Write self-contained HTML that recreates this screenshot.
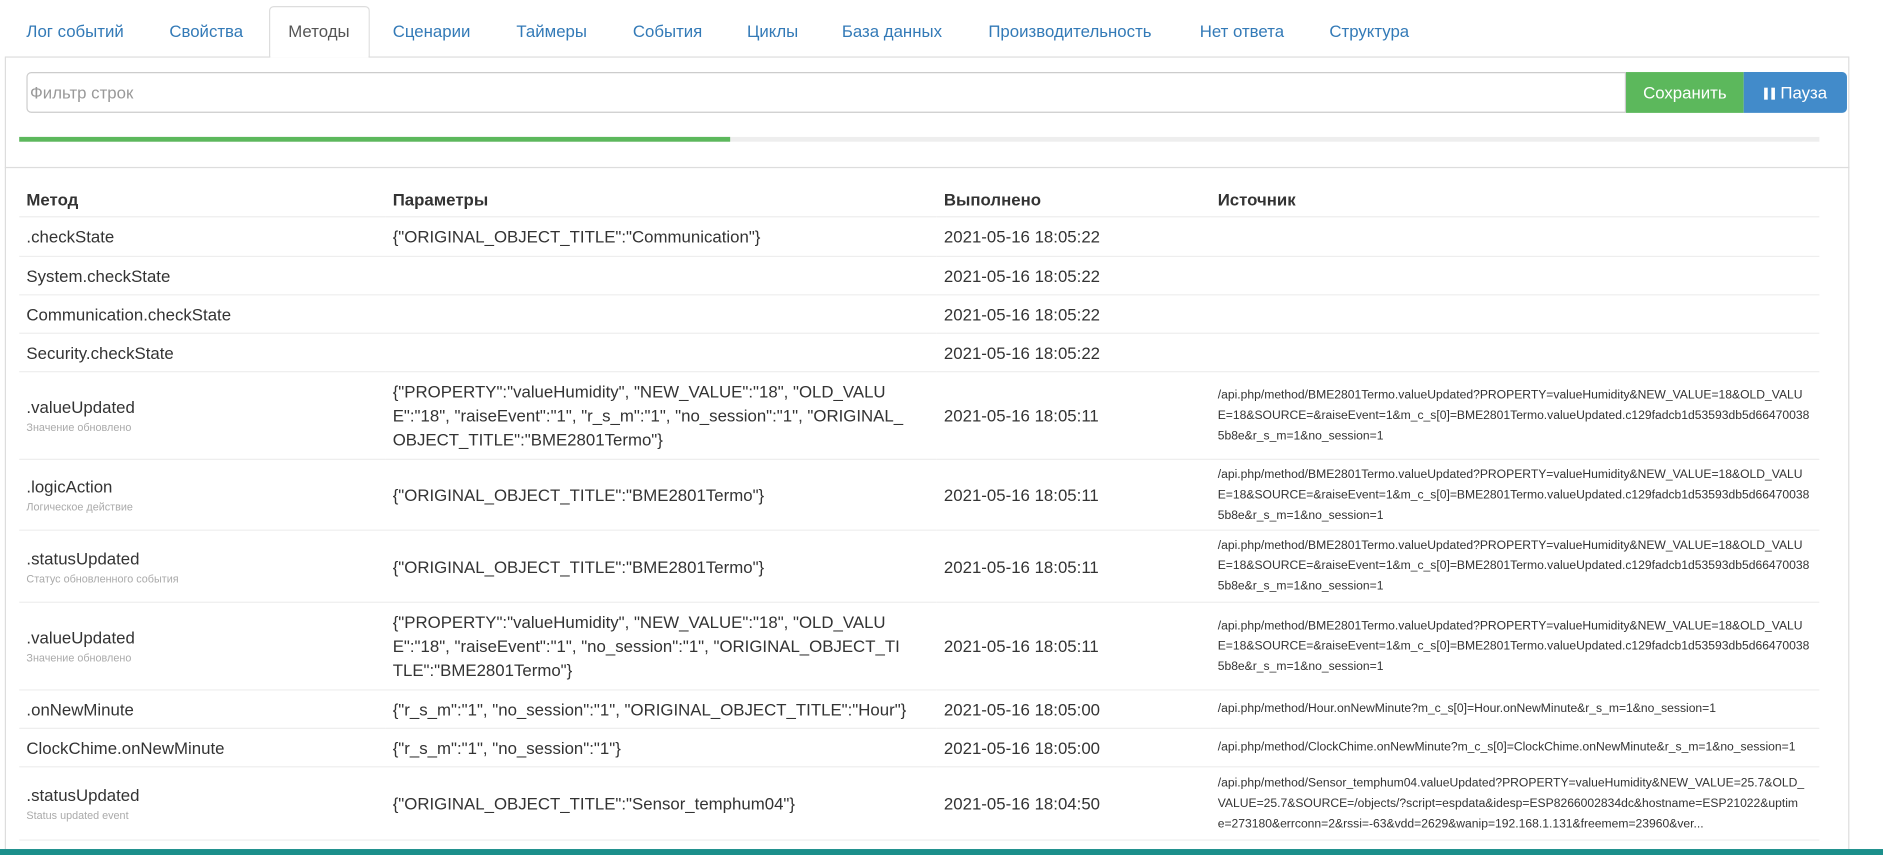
<!DOCTYPE html>
<html><head><meta charset="utf-8">
<style>
html,body{margin:0;padding:0;width:1883px;height:855px;overflow:hidden;background:#fff}
#w{position:absolute;left:0;top:0;width:1568px;height:712px;transform:scale(1.2009);transform-origin:0 0;font-family:"Liberation Sans",Arial,sans-serif;color:#333;font-size:14px;overflow:hidden}
.tabs{position:absolute;left:0;top:0;width:1568px;height:47px}
.tab{position:absolute;top:18px;color:#337ab7;font-size:14px}
.act{position:absolute;left:224px;top:5px;width:84px;height:43px;background:#fff;border:1px solid #ddd;border-bottom:none;border-radius:4px 4px 0 0;box-sizing:border-box}
.panel{position:absolute;left:4px;top:47px;width:1536px;height:670px;border:1px solid #ddd;box-sizing:border-box}
.inp{position:absolute;left:22px;top:60px;width:1332px;height:34px;border:1px solid #ccc;border-radius:4px 0 0 4px;box-sizing:border-box;color:#999;font-size:14px;padding:8px 0 0 2px}
.btn{position:absolute;top:60px;height:34px;color:#fff;font-size:14px;box-sizing:border-box;padding-top:9px;text-align:center}
.prog{position:absolute;left:16px;top:114px;width:1499px;height:4px;background:#eee}
.prog div{width:592px;height:4px;background:#5cb85c}
.sep{position:absolute;left:4px;top:139px;width:1536px;height:1px;background:#ddd}
table{position:absolute;left:16px;top:143px;width:1499px;border-collapse:collapse;table-layout:fixed}
td,th{padding:0 0 0 6px;text-align:left;vertical-align:middle;border-top:1px solid #eee;white-space:nowrap}
th{border-top:none;font-weight:bold;height:31px;vertical-align:bottom;padding-bottom:6px}
td{font-size:14px;line-height:20px}
td.s{font-size:10.1px;line-height:17px}
small{display:block;font-size:9px;color:#aaa;line-height:14px}
.bot{position:absolute;left:0;top:707px;width:1568px;height:5px;background:#1b8f8b}
</style></head><body><div id="w">
<div class="tabs">
<div class="act"></div>
<span class="tab" style="left:22px">Лог событий</span>
<span class="tab" style="left:141px">Свойства</span>
<span class="tab" style="left:240px;color:#555">Методы</span>
<span class="tab" style="left:327px">Сценарии</span>
<span class="tab" style="left:430px">Таймеры</span>
<span class="tab" style="left:527px">События</span>
<span class="tab" style="left:622px">Циклы</span>
<span class="tab" style="left:701px">База данных</span>
<span class="tab" style="left:823px">Производительность</span>
<span class="tab" style="left:999px">Нет ответа</span>
<span class="tab" style="left:1107px">Структура</span>
</div>
<div class="panel"></div>
<div class="act" style="height:2px;top:46px;border:none;left:225px;width:82px"></div>
<div class="inp">Фильтр строк</div>
<div class="btn" style="left:1354px;width:98px;background:#5cb85c">Сохранить</div>
<div class="btn" style="left:1452px;width:86px;background:#428bca;border-radius:0 4px 4px 0"><span style="display:inline-block;width:3px;height:10px;border-left:3px solid #fff;border-right:3px solid #fff;margin-right:5px;vertical-align:-1px"></span>Пауза</div>
<div class="prog"><div></div></div>
<div class="sep"></div>
<table>
<colgroup><col style="width:305px"><col style="width:459px"><col style="width:228px"><col style="width:507px"></colgroup>
<tr><th>Метод</th><th>Параметры</th><th>Выполнено</th><th>Источник</th></tr>
<tr style="height:33px"><td>.checkState</td><td>{"ORIGINAL_OBJECT_TITLE":"Communication"}</td><td>2021-05-16 18:05:22</td><td class="s"></td></tr>
<tr style="height:32px"><td>System.checkState</td><td></td><td>2021-05-16 18:05:22</td><td></td></tr>
<tr style="height:32px"><td>Communication.checkState</td><td></td><td>2021-05-16 18:05:22</td><td></td></tr>
<tr style="height:32px"><td>Security.checkState</td><td></td><td>2021-05-16 18:05:22</td><td></td></tr>
<tr style="height:73px"><td>.valueUpdated<small>Значение обновлено</small></td><td>{"PROPERTY":"valueHumidity", "NEW_VALUE":"18", "OLD_VALU<br>E":"18", "raiseEvent":"1", "r_s_m":"1", "no_session":"1", "ORIGINAL_<br>OBJECT_TITLE":"BME2801Termo"}</td><td>2021-05-16 18:05:11</td><td class="s">/api.php/method/BME2801Termo.valueUpdated?PROPERTY=valueHumidity&amp;NEW_VALUE=18&amp;OLD_VALU<br>E=18&amp;SOURCE=&amp;raiseEvent=1&amp;m_c_s[0]=BME2801Termo.valueUpdated.c129fadcb1d53593db5d66470038<br>5b8e&amp;r_s_m=1&amp;no_session=1</td></tr>
<tr style="height:59px"><td>.logicAction<small>Логическое действие</small></td><td>{"ORIGINAL_OBJECT_TITLE":"BME2801Termo"}</td><td>2021-05-16 18:05:11</td><td class="s">/api.php/method/BME2801Termo.valueUpdated?PROPERTY=valueHumidity&amp;NEW_VALUE=18&amp;OLD_VALU<br>E=18&amp;SOURCE=&amp;raiseEvent=1&amp;m_c_s[0]=BME2801Termo.valueUpdated.c129fadcb1d53593db5d66470038<br>5b8e&amp;r_s_m=1&amp;no_session=1</td></tr>
<tr style="height:60px"><td>.statusUpdated<small>Статус обновленного события</small></td><td>{"ORIGINAL_OBJECT_TITLE":"BME2801Termo"}</td><td>2021-05-16 18:05:11</td><td class="s">/api.php/method/BME2801Termo.valueUpdated?PROPERTY=valueHumidity&amp;NEW_VALUE=18&amp;OLD_VALU<br>E=18&amp;SOURCE=&amp;raiseEvent=1&amp;m_c_s[0]=BME2801Termo.valueUpdated.c129fadcb1d53593db5d66470038<br>5b8e&amp;r_s_m=1&amp;no_session=1</td></tr>
<tr style="height:73px"><td>.valueUpdated<small>Значение обновлено</small></td><td>{"PROPERTY":"valueHumidity", "NEW_VALUE":"18", "OLD_VALU<br>E":"18", "raiseEvent":"1", "no_session":"1", "ORIGINAL_OBJECT_TI<br>TLE":"BME2801Termo"}</td><td>2021-05-16 18:05:11</td><td class="s">/api.php/method/BME2801Termo.valueUpdated?PROPERTY=valueHumidity&amp;NEW_VALUE=18&amp;OLD_VALU<br>E=18&amp;SOURCE=&amp;raiseEvent=1&amp;m_c_s[0]=BME2801Termo.valueUpdated.c129fadcb1d53593db5d66470038<br>5b8e&amp;r_s_m=1&amp;no_session=1</td></tr>
<tr style="height:32px"><td>.onNewMinute</td><td>{"r_s_m":"1", "no_session":"1", "ORIGINAL_OBJECT_TITLE":"Hour"}</td><td>2021-05-16 18:05:00</td><td class="s">/api.php/method/Hour.onNewMinute?m_c_s[0]=Hour.onNewMinute&amp;r_s_m=1&amp;no_session=1</td></tr>
<tr style="height:32px"><td>ClockChime.onNewMinute</td><td>{"r_s_m":"1", "no_session":"1"}</td><td>2021-05-16 18:05:00</td><td class="s">/api.php/method/ClockChime.onNewMinute?m_c_s[0]=ClockChime.onNewMinute&amp;r_s_m=1&amp;no_session=1</td></tr>
<tr style="height:61px"><td>.statusUpdated<small>Status updated event</small></td><td>{"ORIGINAL_OBJECT_TITLE":"Sensor_temphum04"}</td><td>2021-05-16 18:04:50</td><td class="s">/api.php/method/Sensor_temphum04.valueUpdated?PROPERTY=valueHumidity&amp;NEW_VALUE=25.7&amp;OLD_<br>VALUE=25.7&amp;SOURCE=/objects/?script=espdata&amp;idesp=ESP8266002834dc&amp;hostname=ESP21022&amp;uptim<br>e=273180&amp;errconn=2&amp;rssi=-63&amp;vdd=2629&amp;wanip=192.168.1.131&amp;freemem=23960&amp;ver...</td></tr>
<tr style="height:40px"><td></td><td></td><td></td><td class="s" style="vertical-align:top;padding-top:4px">/api.php/method/Sensor_temphum04.valueUpdated?PROPERTY=valueHumidity&amp;NEW_VALUE=25.7&amp;OLD_</td></tr>
</table>
<div class="bot"></div>
</div></body></html>
